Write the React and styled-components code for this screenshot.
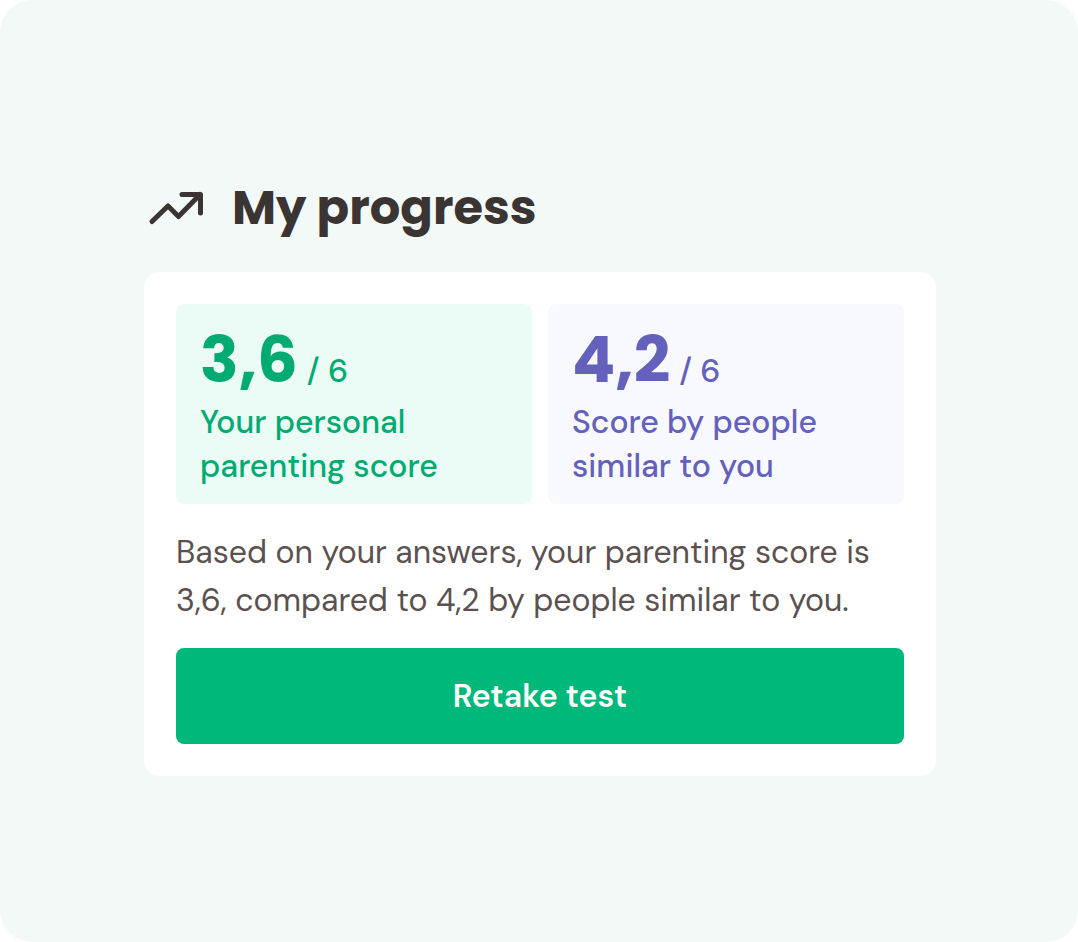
import React from "react";
import styled, { createGlobalStyle } from "styled-components";

const colors = {
    page: "#f2f9f7",
    ink: "#3a3432",
    text: "#5a5150",
    green: "#00b87a",
};

const scores = [
    { value: "3,6", max: "6", label: ["Your personal", "parenting score"], color: "#00ab72", background: "#ebfcf7" },
    { value: "4,2", max: "6", label: ["Score by people", "similar to you"], color: "#6461bd", background: "#f8f9ff" },
];

const ScoreCard = ({ score }) => {
    return (
        <ScoreBox color={score.color} background={score.background}>
            <ScoreLine>
                <ScoreValue>{score.value}</ScoreValue>
                <ScoreMax>/ {score.max}</ScoreMax>
            </ScoreLine>
            <ScoreLabel>
                {score.label[0]}
                <br />
                {score.label[1]}
            </ScoreLabel>
        </ScoreBox>
    );
};

const App = () => {
    return (
        <>
            <GlobalStyle />
            <Page>
                <Section>
                    <Header>
                        <TrendIcon viewBox="0 0 64 64" aria-hidden="true">
                            <path d="M8 45.500 L24 30 L34.500 40.500 L56 18.500 M38 18.500 H56.500 V37" />
                        </TrendIcon>
                        <Title>My progress</Title>
                    </Header>
                    <Panel>
                        <Scores>
                            {scores.map((score) => {
                                return <ScoreCard key={score.value} score={score} />;
                            })}
                        </Scores>
                        <Summary>
                            Based on your answers, your parenting score is
                            <br />
                            3,6, compared to 4,2 by people similar to you.
                        </Summary>
                        <RetakeButton type="button">Retake test</RetakeButton>
                    </Panel>
                </Section>
            </Page>
        </>
    );
};

export default App;

const GlobalStyle = createGlobalStyle`
    * {
        box-sizing: border-box;
    }

    body {
        margin: 0;
        background-color: #ffffff;
        font-family: "DM Sans", Inter, sans-serif;
        -webkit-font-smoothing: antialiased;
    }
`;

const Page = styled.main`
    min-height: 100vh;
    padding: 176px 142px 166px 144px;
    border-radius: 32px;
    background-color: ${colors.page};
`;

const Section = styled.section`
    display: flex;
    flex-direction: column;
    gap: 32px;
`;

const Header = styled.header`
    display: flex;
    align-items: center;
    gap: 24px;
`;

const TrendIcon = styled.svg`
    width: 64px;
    height: 64px;
    fill: none;
    stroke: ${colors.ink};
    stroke-width: 5;
    stroke-linecap: round;
    stroke-linejoin: round;
`;

const Title = styled.h1`
    margin: 0;
    font-family: Poppins, "DM Sans", Inter, sans-serif;
    font-size: 48px;
    font-weight: 700;
    line-height: 64px;
    color: ${colors.ink};
`;

const Panel = styled.div`
    padding: 32px;
    border-radius: 16px;
    background-color: #ffffff;
`;

const Scores = styled.div`
    display: grid;
    grid-template-columns: repeat(2, 1fr);
    gap: 16px;
`;

const ScoreBox = styled.div`
    padding: 24px 24px 16px;
    border-radius: 8px;
    color: ${(props) => props.color};
    background-color: ${(props) => props.background};
`;

const ScoreLine = styled.div`
    display: flex;
    align-items: baseline;
    gap: 9px;
    margin-bottom: 8px;
`;

const ScoreValue = styled.strong`
    font-family: Poppins, "DM Sans", Inter, sans-serif;
    font-size: 64px;
    font-weight: 700;
    line-height: 64px;
`;

const ScoreMax = styled.span`
    font-size: 32px;
    font-weight: 500;
    line-height: 32px;
`;

const ScoreLabel = styled.p`
    margin: 0;
    font-size: 32px;
    font-weight: 500;
    line-height: 44px;
`;

const Summary = styled.p`
    margin: 24px 0;
    font-size: 32px;
    line-height: 48px;
    color: ${colors.text};
`;

const RetakeButton = styled.button`
    width: 100%;
    height: 96px;
    border: none;
    border-radius: 8px;
    background-color: ${colors.green};
    color: #ffffff;
    font-family: inherit;
    font-size: 32px;
    font-weight: 600;
    cursor: pointer;
`;
